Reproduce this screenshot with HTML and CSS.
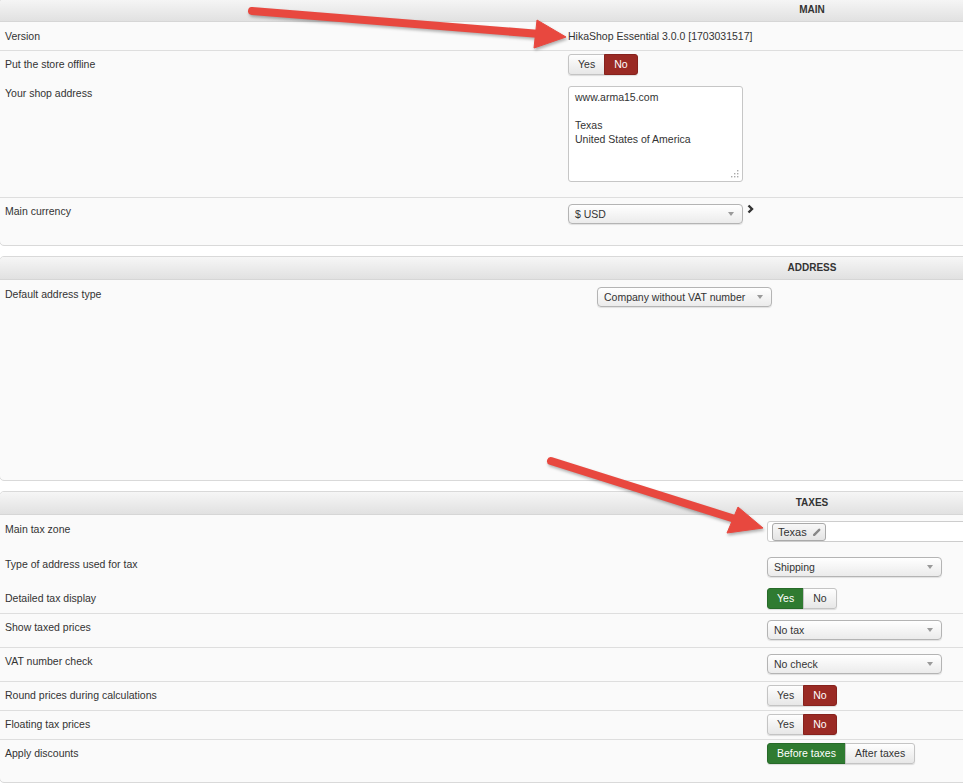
FILE: index.html
```html
<!DOCTYPE html>
<html lang="en">
<head>
    <meta charset="UTF-8">
    <meta name="viewport" content="width=device-width, initial-scale=1.0">
    <title>HikaShop configuration</title>
    <link rel="stylesheet" href="styles.css">
</head>
<body>
    <div class="page">
        <div class="panel panel-main">
            <div class="panel-head">MAIN</div>
            <table class="opts">
                <tr>
                    <td class="key">Version</td>
                    <td>HikaShop Essential 3.0.0 [1703031517]</td>
                </tr>
                <tr class="sep">
                    <td class="key">Put the store offline</td>
                    <td>
                        <div class="toggle"><span class="btn">Yes</span><span class="btn red">No</span></div>
                    </td>
                </tr>
                <tr>
                    <td class="key">Your shop address</td>
                    <td>
                        <div class="textarea">www.arma15.com<br><br>Texas<br>United States of America
                            <svg class="grip" width="8" height="8" viewBox="0 0 8 8">
                                <rect x="6" y="0" width="1.4" height="1.4"/>
                                <rect x="3" y="3" width="1.4" height="1.4"/>
                                <rect x="6" y="3" width="1.4" height="1.4"/>
                                <rect x="0" y="6" width="1.4" height="1.4"/>
                                <rect x="3" y="6" width="1.4" height="1.4"/>
                                <rect x="6" y="6" width="1.4" height="1.4"/>
                            </svg>
                        </div>
                    </td>
                </tr>
                <tr class="sep">
                    <td class="key">Main currency</td>
                    <td>
                        <div class="with-link">
                            <div class="select"><span>$ USD</span><i class="caret"></i></div>
                            <svg class="chevron" width="7" height="10" viewBox="0 0 7 10">
                                <path d="M1.5 1.5 L5 5 L1.5 8.5" fill="none" stroke="#333" stroke-width="2.4"/>
                            </svg>
                        </div>
                    </td>
                </tr>
            </table>
        </div>

        <div class="panel panel-address">
            <div class="panel-head">ADDRESS</div>
            <table class="opts">
                <tr>
                    <td class="key">Default address type</td>
                    <td>
                        <div class="select"><span>Company without VAT number</span><i class="caret"></i></div>
                    </td>
                </tr>
            </table>
        </div>

        <div class="panel panel-taxes">
            <div class="panel-head">TAXES</div>
            <table class="opts">
                <tr>
                    <td class="key">Main tax zone</td>
                    <td>
                        <div class="tag-input">
                            <span class="tag">Texas
                                <svg width="8" height="8" viewBox="0 0 8 8">
                                    <path d="M1.2 6.8 L6.2 1.8" stroke="#888" stroke-width="2.4" stroke-linecap="round"/>
                                    <path d="M0.5 7.5 L1.6 5.2 L2.8 6.4 Z" fill="#888"/>
                                </svg>
                            </span>
                        </div>
                    </td>
                </tr>
                <tr>
                    <td class="key">Type of address used for tax</td>
                    <td>
                        <div class="select"><span>Shipping</span><i class="caret"></i></div>
                    </td>
                </tr>
                <tr>
                    <td class="key">Detailed tax display</td>
                    <td>
                        <div class="toggle"><span class="btn green">Yes</span><span class="btn">No</span></div>
                    </td>
                </tr>
                <tr class="sep">
                    <td class="key">Show taxed prices</td>
                    <td>
                        <div class="select"><span>No tax</span><i class="caret"></i></div>
                    </td>
                </tr>
                <tr class="sep">
                    <td class="key">VAT number check</td>
                    <td>
                        <div class="select"><span>No check</span><i class="caret"></i></div>
                    </td>
                </tr>
                <tr class="sep">
                    <td class="key">Round prices during calculations</td>
                    <td>
                        <div class="toggle"><span class="btn">Yes</span><span class="btn red">No</span></div>
                    </td>
                </tr>
                <tr class="sep">
                    <td class="key">Floating tax prices</td>
                    <td>
                        <div class="toggle"><span class="btn">Yes</span><span class="btn red">No</span></div>
                    </td>
                </tr>
                <tr class="sep">
                    <td class="key">Apply discounts</td>
                    <td>
                        <div class="toggle"><span class="btn green">Before taxes</span><span class="btn">After taxes</span></div>
                    </td>
                </tr>
            </table>
        </div>
    </div>

    <!-- annotation arrows drawn over the screenshot -->
    <svg class="arrows" width="963" height="783" viewBox="0 0 963 783">
        <g fill="#e8483f" stroke="#e8483f">
            <line x1="252" y1="11" x2="540" y2="34" stroke-width="8" stroke-linecap="round"/>
            <polygon points="537,20 566,37 534,48" stroke-width="1" stroke-linejoin="round"/>
            <line x1="551" y1="461" x2="735" y2="519" stroke-width="8" stroke-linecap="round"/>
            <polygon points="738,507 763,528 727,533" stroke-width="1" stroke-linejoin="round"/>
        </g>
    </svg>
</body>
</html>
```

FILE: styles.css
```css
html, body {
    overflow: hidden;
}
body {
    margin: 0;
    background: #fff;
    color: #333;
    font-family: "Liberation Sans", Arial, sans-serif;
    font-size: 10.5px;
}
.page {
    margin: -2px 0 0 -1px;
}
.panel {
    width: 1626px;
    box-sizing: border-box;
    background: #fafafa;
    border: 1px solid #d9d9d9;
    border-radius: 5px;
    padding-bottom: 14px;
    margin-bottom: 10px;
}
.panel-head {
    height: 22px;
    line-height: 22px;
    text-align: center;
    font-size: 10px;
    font-weight: bold;
    color: #333;
    background: linear-gradient(#f6f6f6, #e1e1e1);
    border-bottom: 1px solid #d6d6d6;
    border-radius: 4px 4px 0 0;
}
.panel-address {
    height: 225px;
}
.opts {
    width: 100%;
    border-collapse: collapse;
}
.opts td {
    padding: 4px 5px;
    vertical-align: top;
    line-height: 20px;
}
.opts tr.sep td {
    padding-top: 3px;
    border-top: 1px solid #dedede;
}
.panel-main .key {
    width: 553px;
}
.panel-address .key {
    width: 582px;
}
.panel-taxes .key {
    width: 752px;
}

/* yes / no buttons */
.toggle {
    display: inline-flex;
    height: 21px;
    border-radius: 3px;
    box-shadow: 0 1px 1px rgba(0, 0, 0, 0.12);
}
.btn {
    padding: 0 9px;
    line-height: 19px;
    border: 1px solid #c4c4c4;
    background: linear-gradient(#fefefe, #e7e7e7);
    color: #333;
}
.btn + .btn {
    margin-left: -1px;
}
.btn:first-child {
    border-radius: 3px 0 0 3px;
}
.btn:last-child {
    border-radius: 0 3px 3px 0;
}
.btn.red {
    background: #9a2a24;
    border-color: #86221d;
    color: #fff;
}
.btn.green {
    background: #2f7b31;
    border-color: #276a29;
    color: #fff;
}

/* dropdowns */
.select {
    display: flex;
    align-items: center;
    justify-content: space-between;
    width: 175px;
    height: 20px;
    box-sizing: border-box;
    margin: 3px 0;
    padding: 0 8px 0 6px;
    border: 1px solid #b4b4b4;
    border-radius: 4px;
    background: linear-gradient(#ffffff, #ebebeb);
    box-shadow: 0 1px 1px rgba(0, 0, 0, 0.1);
    line-height: 18px;
}
.caret {
    width: 0;
    height: 0;
    border-left: 3px solid transparent;
    border-right: 3px solid transparent;
    border-top: 4px solid #9a9a9a;
}
.with-link {
    display: flex;
    align-items: flex-start;
    gap: 4px;
}
.chevron {
    margin-top: 3px;
}

.textarea {
    position: relative;
    width: 175px;
    height: 96px;
    box-sizing: border-box;
    margin: 3px 0 11px;
    padding: 3px 6px;
    line-height: 14px;
    background: #fff;
    border: 1px solid #c6c6c6;
    border-radius: 3px;
}
.grip {
    position: absolute;
    right: 3px;
    bottom: 3px;
    fill: #aaa;
}

/* zone picker */
.tag-input {
    display: flex;
    align-items: center;
    width: 300px;
    height: 21px;
    box-sizing: border-box;
    margin: 2px 0 4px;
    padding: 0 4px;
    background: #fff;
    border: 1px solid #cdcdcd;
    border-radius: 3px;
}
.tag {
    display: inline-flex;
    align-items: center;
    gap: 6px;
    height: 16px;
    padding: 0 4px 0 5px;
    line-height: 14px;
    font-size: 11px;
    border: 1px solid #aaa;
    border-radius: 3px;
    background: linear-gradient(#f8f8f8, #e4e4e4);
}

.arrows {
    position: absolute;
    top: 0;
    left: 0;
    pointer-events: none;
    filter: drop-shadow(1px 2px 1.5px rgba(0, 0, 0, 0.3));
}
```
